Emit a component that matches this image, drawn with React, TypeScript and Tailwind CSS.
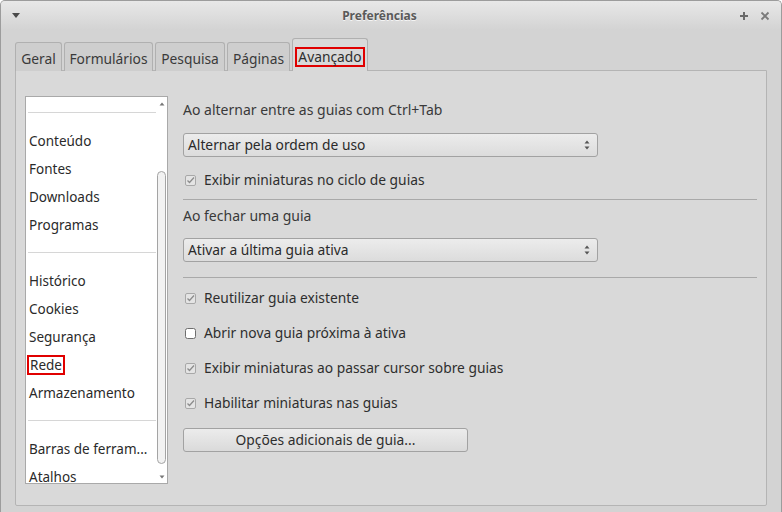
import React from "react";

const font = { fontFamily: '"Noto Sans", "DejaVu Sans", sans-serif' };

const Checked = () => (
  <svg width="11" height="11" viewBox="0 0 11 11" className="shrink-0">
    <rect x="0.5" y="0.5" width="10" height="10" rx="1.5" fill="#e4e4e4" stroke="#a8a8a8" />
    <path d="M2.5 5.5 L4.5 7.5 L9 2.5" fill="none" stroke="#8c8c8c" strokeWidth="1.3" />
  </svg>
);

const Unchecked = () => (
  <svg width="11" height="11" viewBox="0 0 11 11" className="shrink-0">
    <rect x="0.5" y="0.5" width="10" height="10" rx="2" fill="#ffffff" stroke="#6e6e6e" />
  </svg>
);

const Spinner = () => (
  <svg width="8" height="12" viewBox="0 0 8 12">
    <path d="M4 1.5 L6.5 4.5 L1.5 4.5 Z" fill="#555" />
    <path d="M1.5 7.5 L6.5 7.5 L4 10.5 Z" fill="#555" />
  </svg>
);

const Select = ({ label }: { label: string }) => (
  <div className="h-[24px] w-[415px] flex items-center justify-between pl-[4px] pr-[6px] rounded-[3px] border border-[#a2a2a2] bg-gradient-to-b from-[#ececec] to-[#dcdcdc] text-[13.8px] text-[#2a2a2a]">
    <span>{label}</span>
    <Spinner />
  </div>
);

const CheckRow = ({ checked, label }: { checked: boolean; label: string }) => (
  <div className="h-[35px] flex items-center gap-[8px] pl-[2px] text-[13.8px] text-[#2e2e2e]">
    {checked ? <Checked /> : <Unchecked />}
    <span>{label}</span>
  </div>
);

const tabs = [
  { name: "Geral", w: "w-[47px]" },
  { name: "Formulários", w: "w-[89px]" },
  { name: "Pesquisa", w: "w-[70px]" },
  { name: "Páginas", w: "w-[63px]" },
];

const groups = [
  ["Conteúdo", "Fontes", "Downloads", "Programas"],
  ["Histórico", "Cookies", "Segurança", "Rede", "Armazenamento"],
  ["Barras de ferram...", "Atalhos"],
];

export default function App() {
  return (
    <div
      className="w-[782px] h-[512px] overflow-hidden bg-[#d3d3d3] border-l border-t border-r border-[#9c9c9c] rounded-t-[5px] flex flex-col"
      style={font}
    >
      {/* title bar */}
      <div className="h-[29px] shrink-0 flex items-center justify-between px-[11px] bg-gradient-to-b from-[#e8e8e8] to-[#d3d3d3]">
        <svg width="8" height="6" viewBox="0 0 8 6">
          <path d="M0 0 L8 0 L4 5 Z" fill="#4a4a4a" />
        </svg>
        <span className="text-[12px] font-bold text-[#5a5a5a] [text-shadow:0_1px_0_#f4f4f4]">Preferências</span>
        <div className="flex items-center gap-[11px]">
          <svg width="10" height="10" viewBox="0 0 10 10">
            <path d="M5 1 V9 M1 5 H9" stroke="#6a6a6a" strokeWidth="2" />
          </svg>
          <svg width="10" height="10" viewBox="0 0 10 10">
            <path d="M1.5 1.5 L8.5 8.5 M8.5 1.5 L1.5 8.5" stroke="#7a7a7a" strokeWidth="1.8" />
          </svg>
        </div>
      </div>

      {/* body */}
      <div className="flex-1 flex flex-col pl-[14px] pr-[14px] pt-[8px] pb-[6px]">
        {/* tabs */}
        <div className="h-[33px] flex items-end gap-[2px] relative z-10 -mb-px">
          {tabs.map((t) => (
            <div
              key={t.name}
              className={`${t.w} h-[29px] flex items-center justify-center pt-[5px] rounded-t-[3px] border border-b-0 border-[#b0b0b0] bg-[#cecece] text-[13.8px] text-[#3a3a3a]`}
            >
              {t.name}
            </div>
          ))}
          <div className="w-[76px] h-[33px] flex items-center justify-center pt-[4px] rounded-t-[3px] border border-b-0 border-[#b0b0b0] bg-[#d9d9d9] text-[13.8px] text-[#2e2e2e]">
            <span className="border-2 border-[#e00000] px-[1px] leading-[16px]">Avançado</span>
          </div>
        </div>

        {/* pane */}
        <div className="flex-1 border border-[#b4b4b4] bg-[#d9d9d9] rounded-b-[2px] flex pl-[9px] pt-[25px] pb-[21px] gap-[15px]">
          {/* category list */}
          <div className="w-[143px] h-[388px] bg-white border border-[#a9a9a9] flex overflow-hidden">
            <div className="flex-1 flex flex-col pt-[15px]">
              {groups.map((g, i) => (
                <div key={i}>
                  <div className="ml-[2px] h-px bg-[#d6d6d6]" />
                  <div className="pt-[14px] pb-[13px]">
                    {g.map((item) => (
                      <div key={item} className="h-[28px] flex items-center pl-[3px] text-[13.5px] text-[#2a2a2a] whitespace-nowrap">
                        {item === "Rede" ? (
                          <span className="border-2 border-[#e00000] -ml-[2px] px-[1px] leading-[16px]">{item}</span>
                        ) : (
                          item
                        )}
                      </div>
                    ))}
                  </div>
                </div>
              ))}
            </div>
            {/* scrollbar */}
            <div className="w-[11px] shrink-0 flex flex-col items-center pt-[5px] pb-[4px]">
              <svg width="6" height="4" viewBox="0 0 6 4">
                <path d="M3 0.5 L5.5 3.5 L0.5 3.5 Z" fill="#777" />
              </svg>
              <div className="mt-[65px] w-[9px] h-[293px] rounded-full border border-[#a4a4a4] bg-[#f2f2f2]" />
              <div className="flex-1" />
              <svg width="6" height="4" viewBox="0 0 6 4">
                <path d="M0.5 0.5 L5.5 0.5 L3 3.5 Z" fill="#777" />
              </svg>
            </div>
          </div>

          {/* options */}
          <div className="flex-1 flex flex-col pr-[9px]">
            <div className="h-[27px] flex items-center text-[14px] text-[#3a3a3a]">Ao alternar entre as guias com Ctrl+Tab</div>
            <div className="mt-[10px]">
              <Select label="Alternar pela ordem de uso" />
            </div>
            <div className="mt-[9px] h-[28px] flex items-center gap-[8px] pl-[2px] text-[13.8px] text-[#2e2e2e]">
              <Checked />
              <span>Exibir miniaturas no ciclo de guias</span>
            </div>
            <div className="mt-[5px] h-px bg-[#a9a9a9]" />
            <div className="mt-[1px] h-[28px] flex items-center text-[14px] text-[#3a3a3a]">Ao fechar uma guia</div>
            <div className="mt-[9px]">
              <Select label="Ativar a última guia ativa" />
            </div>
            <div className="mt-[15px] h-px bg-[#a9a9a9]" />
            <div className="mt-[3px]">
              <CheckRow checked label="Reutilizar guia existente" />
              <CheckRow checked={false} label="Abrir nova guia próxima à ativa" />
              <CheckRow checked label="Exibir miniaturas ao passar cursor sobre guias" />
              <CheckRow checked label="Habilitar miniaturas nas guias" />
            </div>
            <div className="mt-[7px] w-[285px] h-[24px] flex items-center justify-center rounded-[3px] border border-[#a2a2a2] bg-gradient-to-b from-[#ececec] to-[#dadada] text-[13.8px] text-[#2e2e2e]">
              Opções adicionais de guia...
            </div>
          </div>
        </div>
      </div>
    </div>
  );
}
